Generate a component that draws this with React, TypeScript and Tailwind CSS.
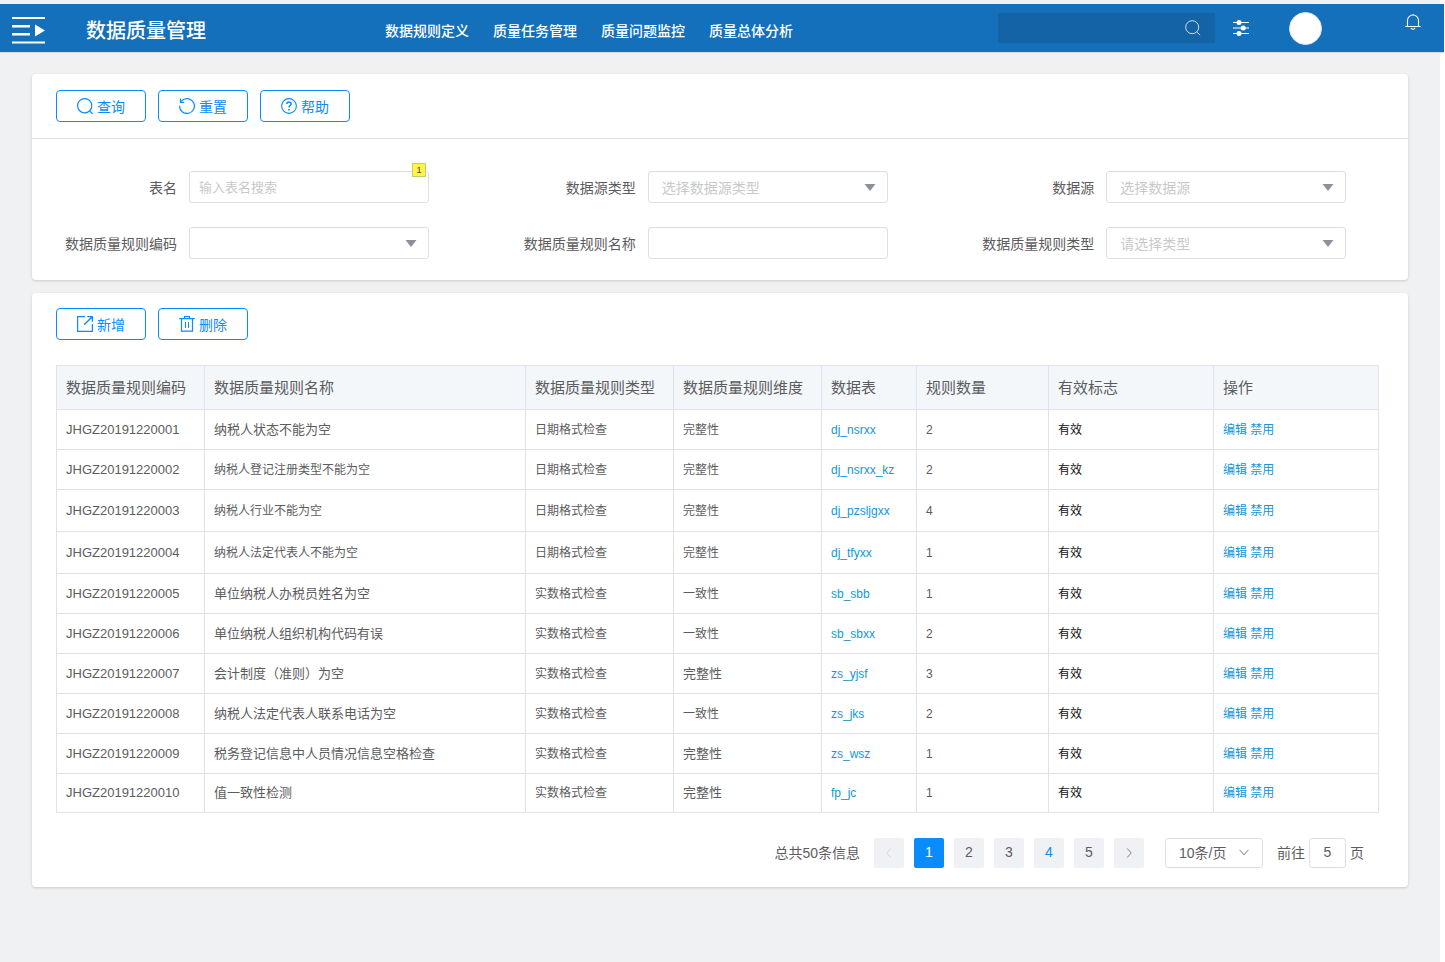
import type { ReactNode } from 'react';

interface Rule {
  code: string;
  name: string;
  type: string;
  dimension: string;
  table: string;
  count: number;
  smallName?: boolean;
}

const navItems = ['数据规则定义', '质量任务管理', '质量问题监控', '质量总体分析'];

const rules: Rule[] = [
  { code: 'JHGZ20191220001', name: '纳税人状态不能为空', type: '日期格式检查', dimension: '完整性', table: 'dj_nsrxx', count: 2 },
  { code: 'JHGZ20191220002', name: '纳税人登记注册类型不能为空', type: '日期格式检查', dimension: '完整性', table: 'dj_nsrxx_kz', count: 2, smallName: true },
  { code: 'JHGZ20191220003', name: '纳税人行业不能为空', type: '日期格式检查', dimension: '完整性', table: 'dj_pzsljgxx', count: 4, smallName: true },
  { code: 'JHGZ20191220004', name: '纳税人法定代表人不能为空', type: '日期格式检查', dimension: '完整性', table: 'dj_tfyxx', count: 1, smallName: true },
  { code: 'JHGZ20191220005', name: '单位纳税人办税员姓名为空', type: '实数格式检查', dimension: '一致性', table: 'sb_sbb', count: 1 },
  { code: 'JHGZ20191220006', name: '单位纳税人组织机构代码有误', type: '实数格式检查', dimension: '一致性', table: 'sb_sbxx', count: 2 },
  { code: 'JHGZ20191220007', name: '会计制度（准则）为空', type: '实数格式检查', dimension: '完整性', table: 'zs_yjsf', count: 3 },
  { code: 'JHGZ20191220008', name: '纳税人法定代表人联系电话为空', type: '实数格式检查', dimension: '一致性', table: 'zs_jks', count: 2 },
  { code: 'JHGZ20191220009', name: '税务登记信息中人员情况信息空格检查', type: '实数格式检查', dimension: '完整性', table: 'zs_wsz', count: 1 },
  { code: 'JHGZ20191220010', name: '值一致性检测', type: '实数格式检查', dimension: '完整性', table: 'fp_jc', count: 1 },
];

const columns = [
  { title: '数据质量规则编码', width: 'w-[148px]' },
  { title: '数据质量规则名称', width: '' },
  { title: '数据质量规则类型', width: 'w-[148px]' },
  { title: '数据质量规则维度', width: 'w-[148px]' },
  { title: '数据表', width: 'w-[95px]' },
  { title: '规则数量', width: 'w-[132px]' },
  { title: '有效标志', width: 'w-[165px]' },
  { title: '操作', width: 'w-[165px]' },
];

const rowHeights = ['h-10', 'h-10', 'h-[42px]', 'h-[42px]', 'h-10', 'h-10', 'h-10', 'h-10', 'h-10', 'h-[39px]'];

const Icon = ({ children, className = 'w-4 h-4' }: { children: ReactNode; className?: string }) => (
  <svg className={className} viewBox="0 0 16 16" fill="none" stroke="currentColor" aria-hidden="true">
    {children}
  </svg>
);

const SearchIcon = () => (
  <Icon>
    <circle cx="7.7" cy="7.7" r="7.1" strokeWidth="1.2" />
    <path d="M12.6 12.8l3 3" strokeWidth="1.2" />
  </Icon>
);

const ResetIcon = () => (
  <Icon>
    <path d="M.6 7.8a7.4 7.4 0 1 0 3-5.700L1.4 4.1" strokeWidth="1.2" />
    <path d="M1.500 .5v3.800h3.700" strokeWidth="1.2" />
  </Icon>
);

const HelpIcon = () => (
  <Icon>
    <circle cx="8" cy="8" r="7.4" strokeWidth="1.1" />
    <path d="M5.9 6.1c0-1.3.9-2.1 2.1-2.1s2.1.8 2.1 1.9c0 1.5-2.1 1.7-2.1 3.7" strokeWidth="1.5" />
    <path d="M8 10.9v1.5" strokeWidth="1.6" />
  </Icon>
);

const AddIcon = () => (
  <Icon>
    <path d="M8 .6H.6v14.8h14.8V8" strokeWidth="1.2" />
    <path d="M10.300 .6h5.1v5.1M15.2.8L7.2 8.8" strokeWidth="1.4" />
  </Icon>
);

const TrashIcon = () => (
  <Icon>
    <path d="M.3 2.6h15.4M5.6 2.4V.5h4.8v1.9M2.5 2.8v12.4h11V2.8" strokeWidth="1.2" />
    <path d="M6.500 6v6M9.500 6v6" />
  </Icon>
);

const ToolButton = ({ icon, children }: { icon: ReactNode; children: ReactNode }) => (
  <button
    type="button"
    className="flex h-8 w-[90px] items-center justify-center gap-1 rounded-[4px] border border-[#0a8cff] bg-white text-[#0a8cff]"
  >
    {icon}
    <span className="mt-px">{children}</span>
  </button>
);

const Field = ({ id, label, children }: { id: string; label: string; children: ReactNode }) => (
  <div className="flex items-center gap-3">
    <label htmlFor={id} className="mt-px w-[145px] text-right">
      {label}
    </label>
    <div className="relative w-60">{children}</div>
  </div>
);

const SelectBox = ({ id, placeholder = '' }: { id: string; placeholder?: string }) => (
  <>
    <select
      id={id}
      className="block h-8 w-full appearance-none rounded-[3px] border border-[#dcdfe6] bg-white pt-px pl-[13px] text-[#c8c9cc]"
    >
      <option>{placeholder}</option>
    </select>
    <svg className="pointer-events-none absolute top-[13px] right-3 h-2 w-3" viewBox="0 0 12 8" aria-hidden="true">
      <path d="M.5 0h11L6 7z" fill="#8d9099" />
    </svg>
  </>
);

const Header = () => (
  <header className="mr-px flex h-[49px] items-center border-b border-[#d5dbe6] bg-[#1570bb] pr-[23px] pl-3 text-white">
    <button type="button" aria-label="菜单" className="mt-1">
      <svg className="h-7 w-[34px]" viewBox="0 0 34 28" fill="currentColor" aria-hidden="true">
        <path d="M0 1h33v2H0zM0 9h18v2.500H0zM0 17h18v2.500H0zM0 25.500h33v2H0zM23 8.500l10 6-10 6z" />
      </svg>
    </button>
    <h1 className="mt-1.5 ml-10 text-xl font-medium">数据质量管理</h1>
    <nav className="mt-1.5 ml-[179px] flex gap-6 font-medium">
      {navItems.map((item) => (
        <a key={item} href="#">
          {item}
        </a>
      ))}
    </nav>
    <label className="ml-auto flex h-[30px] w-[217px] items-center bg-[#1463a6] pr-3.5">
      <input type="search" aria-label="搜索" className="h-full min-w-0 flex-1 bg-transparent px-3 outline-none" />
      <Icon className="h-4 w-4 opacity-80">
        <circle cx="7.200" cy="7.200" r="6.500" />
        <path d="M11.800 12l3.400 3.200" />
      </Icon>
    </label>
    <button type="button" aria-label="设置" className="ml-[18px]">
      <Icon>
        <path d="M0 2.500h16M0 8h16M0 13.500h16" />
        <g fill="currentColor" stroke="none">
          <circle cx="6" cy="2.500" r="2.500" />
          <circle cx="10.200" cy="8" r="2.500" />
          <circle cx="6" cy="13.500" r="2.500" />
        </g>
      </Icon>
    </button>
    <button type="button" aria-label="用户" className="ml-10 h-[33px] w-[33px] rounded-full border border-[#dfe3ee] bg-white" />
    <button type="button" aria-label="通知" className="mt-2.5 ml-[83px] self-start">
      <Icon>
        <path d="M.3 12.500h15.400M2.500 12.300V6.500a5.500 5.500 0 0 1 11 0v5.800M8 1V0M6 13.800c.4 1.800 3.600 1.800 4 0" strokeWidth="1.1" />
      </Icon>
    </button>
  </header>
);

const FilterPanel = () => (
  <section className="rounded-[4px] bg-white pb-[21px] shadow-[0_1px_3px_rgba(0,0,0,0.16)]">
    <div className="flex gap-3 border-b border-[#dcdee2] px-6 py-4">
      <ToolButton icon={<SearchIcon />}>查询</ToolButton>
      <ToolButton icon={<ResetIcon />}>重置</ToolButton>
      <ToolButton icon={<HelpIcon />}>帮助</ToolButton>
    </div>
    <form className="mt-8 grid grid-cols-3 gap-y-6">
      <Field id="tableName" label="表名">
        <input
          id="tableName"
          type="text"
          placeholder="输入表名搜索"
          className="block h-8 w-full rounded-[3px] border border-[#dcdfe6] px-[9px] text-[13px] placeholder:text-[#c8c9cc]"
        />
        <span className="absolute -top-2 right-[3px] flex h-3.5 w-3.5 items-center justify-center border border-[#c9c873] bg-[#fff640] text-[9px] text-[#444]">
          1
        </span>
      </Field>
      <Field id="sourceType" label="数据源类型">
        <SelectBox id="sourceType" placeholder="选择数据源类型" />
      </Field>
      <Field id="source" label="数据源">
        <SelectBox id="source" placeholder="选择数据源" />
      </Field>
      <Field id="ruleCode" label="数据质量规则编码">
        <SelectBox id="ruleCode" />
      </Field>
      <Field id="ruleName" label="数据质量规则名称">
        <input id="ruleName" type="text" className="block h-8 w-full rounded-[3px] border border-[#dcdfe6] px-[9px] text-[13px]" />
      </Field>
      <Field id="ruleType" label="数据质量规则类型">
        <SelectBox id="ruleType" placeholder="请选择类型" />
      </Field>
    </form>
  </section>
);

const RuleTable = () => (
  <table className="w-full table-fixed border-collapse text-left text-xs">
    <thead>
      <tr className="h-11 bg-[#f3f7fa] text-[15px]">
        {columns.map((column) => (
          <th key={column.title} className={`border border-[#dfe4ee] px-[9px] font-normal ${column.width}`}>
            {column.title}
          </th>
        ))}
      </tr>
    </thead>
    <tbody>
      {rules.map((rule, i) => (
        <tr key={rule.code} className={rowHeights[i]}>
          <td className="border border-[#e1e2e4] px-[9px] text-[13px]">{rule.code}</td>
          <td className={`border border-[#e1e2e4] px-[9px] ${rule.smallName ? 'text-xs' : 'text-[13px]'}`}>{rule.name}</td>
          <td className="border border-[#e1e2e4] px-[9px]">{rule.type}</td>
          <td className={`border border-[#e1e2e4] px-[9px] ${i > 5 && rule.dimension === '完整性' ? 'text-[13px]' : 'text-xs'}`}>
            {rule.dimension}
          </td>
          <td className="border border-[#e1e2e4] px-[9px]">
            <a href="#" className="text-[#1296db]">{rule.table}</a>
          </td>
          <td className="border border-[#e1e2e4] px-[9px]">{rule.count}</td>
          <td className="border border-[#e1e2e4] px-[9px] text-[#111]">有效</td>
          <td className="border border-[#e1e2e4] px-[9px] text-[#1296db]">
            <a href="#">编辑</a> <a href="#">禁用</a>
          </td>
        </tr>
      ))}
    </tbody>
  </table>
);

const Pagination = () => (
  <div className="mt-[25px] flex h-[30px] items-center justify-end pr-[15px]">
    <span>总共50条信息</span>
    <div className="ml-3.5 flex gap-2.5">
      <button type="button" aria-label="上一页" disabled className="flex h-[30px] w-[30px] items-center justify-center rounded-[2px] bg-[#f0f1f5] text-[#c8cad0]">
        <Icon className="h-3 w-3">
          <path d="M10.500 2L5 8l5.500 6" />
        </Icon>
      </button>
      {[1, 2, 3, 4, 5].map((page) => (
        <button
          key={page}
          type="button"
          className={`h-[30px] w-[30px] rounded-[2px] pb-0.5 ${
            page === 1 ? 'bg-[#0a8cff] text-white' : page === 4 ? 'bg-[#f0f1f5] text-[#0a8cff]' : 'bg-[#f0f1f5]'
          }`}
        >
          {page}
        </button>
      ))}
      <button type="button" aria-label="下一页" className="flex h-[30px] w-[30px] items-center justify-center rounded-[2px] bg-[#f0f1f5]">
        <Icon className="h-3 w-3">
          <path d="M5.500 2L11 8l-5.500 6" />
        </Icon>
      </button>
    </div>
    <div className="relative ml-[21px] w-[98px]">
      <select aria-label="每页条数" className="block h-[30px] w-full appearance-none rounded-[3px] border border-[#dcdfe6] bg-white pl-[13px]">
        <option>10条/页</option>
      </select>
      <Icon className="pointer-events-none absolute top-2.5 right-3.5 h-2.5 w-2.5">
        <path d="M1 3l7 8 7-8" strokeWidth="1.300" />
      </Icon>
    </div>
    <label htmlFor="pageNo" className="ml-3.5">前往</label>
    <input
      id="pageNo"
      type="text"
      defaultValue="5"
      className="mx-1 h-[30px] w-[37px] rounded-[3px] border border-[#dcdfe6] pb-0.5 text-center"
    />
    <span>页</span>
  </div>
);

export default function App() {
  return (
    <div className="flex min-h-screen flex-col bg-white font-['Liberation_Sans','Noto_Sans_CJK_SC',sans-serif] text-sm text-[#5c5c5e]">
      <div className="mr-[5px] h-1 bg-[#f0f1f3]" />
      <Header />
      <main className="mr-[5px] flex flex-1 flex-col gap-[13px] bg-[#f0f1f3] px-8 pt-[21px]">
        <FilterPanel />
        <section className="rounded-[4px] bg-white pt-[15px] pr-[29px] pb-[19px] pl-6 shadow-[0_1px_3px_rgba(0,0,0,0.16)]">
          <div className="mb-[25px] flex gap-3">
            <ToolButton icon={<AddIcon />}>新增</ToolButton>
            <ToolButton icon={<TrashIcon />}>删除</ToolButton>
          </div>
          <RuleTable />
          <Pagination />
        </section>
      </main>
    </div>
  );
}
